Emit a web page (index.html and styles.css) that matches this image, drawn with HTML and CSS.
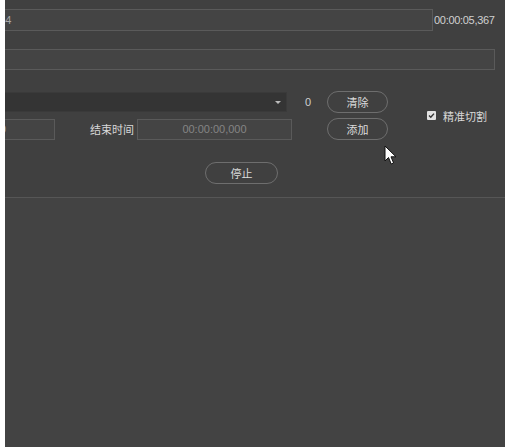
FILE: index.html
```html
<!DOCTYPE html>
<html lang="zh-CN">
<head>
  <meta charset="UTF-8" />
  <title>视频切割</title>
  <link rel="stylesheet" href="styles.css">
</head>
<body>

  <div class="app">
    <!-- Top panel -->
    <div class="panel">
      <div class="row row-file">
        <div class="field field-file">mp4</div>
        <span class="duration">00:00:05,367</span>
      </div>

      <div class="row row-out">
        <div class="field field-out"></div>
      </div>

      <div class="controls">
        <div class="rows">
          <div class="row">
            <div class="select"><span class="caret"></span></div>
            <span class="count">0</span>
            <button class="pill">清除</button>
          </div>
          <div class="row">
            <div class="field field-start">00:00:00,000</div>
            <span class="label">结束时间</span>
            <div class="field field-end">00:00:00,000</div>
            <button class="pill pill-add">添加</button>
          </div>
        </div>
        <label class="precise">
          <span class="check">
            <svg width="7" height="7" viewBox="0 0 7 7"><path d="M1 3.6 L2.8 5.3 L6 1.6" fill="none" stroke="#333" stroke-width="1.4"/></svg>
          </span>
          精准切割
        </label>
      </div>

      <div class="row row-stop">
        <button class="pill pill-stop">停止</button>
      </div>
    </div>

    <div class="bottom"></div>

    <!-- mouse pointer -->
    <svg class="cursor" width="14" height="21" viewBox="0 0 14 21">
      <path d="M1 1 L1 16 L4.5 12.5 L7.2 19 L9.6 18 L7 11.8 L12 11.8 Z" fill="#fff" stroke="#111" stroke-width="1"/>
    </svg>
  </div>

</body>
</html>
```

FILE: styles.css
```css
* {
  margin: 0;
  padding: 0;
  box-sizing: border-box;
}

body {
  background: #fff;
  font-family: "Liberation Sans", "Noto Sans CJK SC", sans-serif;
  font-size: 11px;
  color: #d8d8d8;
}

.app {
  position: relative;
  margin: 0 5px;
  height: 447px;
  background: #434343;
  overflow: hidden;
  display: flex;
  flex-direction: column;
}

.panel {
  background: #404040;
  padding-top: 9px;
  height: 198px;
  border-bottom: 1px solid #565656;
}

.row {
  display: flex;
  align-items: center;
}

.field {
  height: 22px;
  border: 1px solid #5a5a5a;
  background: #444;
  color: #8c8c8c;
  display: flex;
  align-items: center;
}

/* file row */
.field-file {
  width: 468px;
  margin-left: -40px;
  padding-left: 24px;
  color: #a8a8a8;
}

.duration {
  margin-left: 1px;
  color: #d0d0d0;
  letter-spacing: -0.3px;
}

.row-out {
  margin-top: 18px;
}

.field-out {
  width: 530px;
  margin-left: -40px;
  height: 21px;
}

/* controls */
.controls {
  margin-top: 21px;
  margin-left: -40px;
  display: flex;
  align-items: center;
}

.rows {
  display: flex;
  flex-direction: column;
  gap: 5px;
}

.select {
  width: 322px;
  height: 20px;
  background: #343434;
  border: 1px solid #3a3a3a;
  position: relative;
}

.caret {
  position: absolute;
  right: 5px;
  top: 8px;
  border-left: 3px solid transparent;
  border-right: 3px solid transparent;
  border-top: 3px solid #bbb;
}

.count {
  width: 7px;
  margin-left: 18px;
  color: #cfcfcf;
}

.pill {
  width: 61px;
  height: 22px;
  margin-left: 15px;
  border: 1px solid #6e6e6e;
  border-radius: 11px;
  background: transparent;
  color: #dcdcdc;
  font-family: inherit;
  font-size: 11px;
}

.pill-add {
  margin-left: 35px;
}

.field-start {
  width: 90px;
  height: 21px;
  color: #999;
  overflow: hidden;
  white-space: nowrap;
  justify-content: flex-end;
  padding-right: 48px;
}

.label {
  margin-left: 35px;
  width: 45px;
}

.field-end {
  width: 155px;
  height: 21px;
  margin-left: 2px;
  justify-content: center;
  color: #858585;
}

.precise {
  margin-left: 39px;
  display: flex;
  align-items: center;
  gap: 7px;
  color: #d8d8d8;
}

.check {
  width: 9px;
  height: 9px;
  background: #e2e2e2;
  border-radius: 1px;
  display: flex;
  align-items: center;
  justify-content: center;
}

.row-stop {
  margin-top: 22px;
  padding-left: 200px;
}

.pill-stop {
  width: 73px;
  margin-left: 0;
}

.bottom {
  flex: 1;
}

.cursor {
  position: absolute;
  left: 379px;
  top: 145px;
}
```
